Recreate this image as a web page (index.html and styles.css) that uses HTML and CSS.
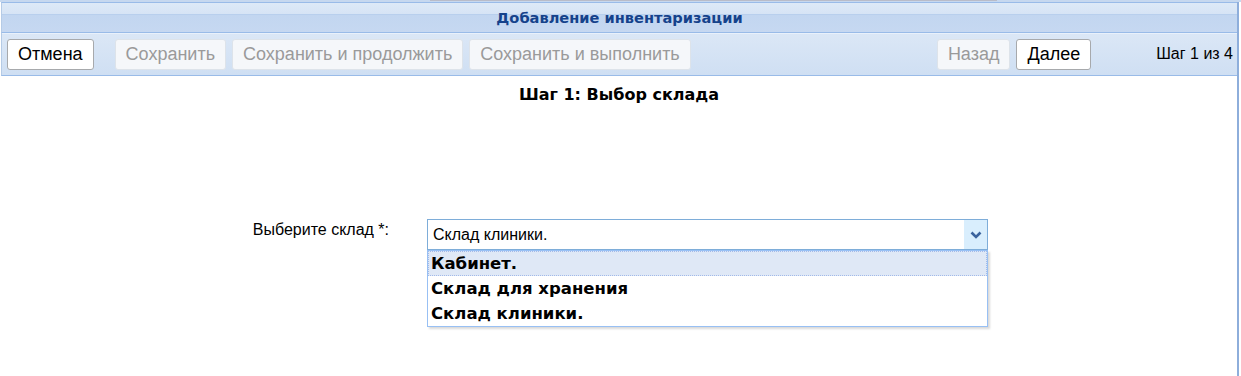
FILE: index.html
```html
<!DOCTYPE html>
<html>
<head>
    <meta charset="utf-8">
    <title>Добавление инвентаризации</title>
    <link rel="stylesheet" href="styles.css">
</head>
<body>
<div class="top-strip">
    <div class="top-strip-thumb"></div>
</div>
<div class="panel">
    <div class="panel-header">Добавление инвентаризации</div>
    <div class="toolbar">
        <div class="btn btn-cancel">Отмена</div>
        <div class="btn is-disabled">Сохранить</div>
        <div class="btn is-disabled">Сохранить и продолжить</div>
        <div class="btn is-disabled">Сохранить и выполнить</div>
        <div class="toolbar-fill"></div>
        <div class="btn is-disabled">Назад</div>
        <div class="btn">Далее</div>
        <div class="step-counter">Шаг 1 из 4</div>
    </div>
    <div class="panel-body">
        <h1 class="step-title">Шаг 1: Выбор склада</h1>
        <div class="form-row">
            <label class="form-label">Выберите склад *:</label>
            <div class="combo">
                <div class="combo-field">
                    <span class="combo-value">Склад клиники.</span>
                    <span class="combo-trigger">
                        <svg width="12" height="8" viewBox="0 0 12 8"><path d="M1.5 1.5 L6 6 L10.5 1.5" fill="none" stroke="#3b639d" stroke-width="2.6"/></svg>
                    </span>
                </div>
                <ul class="combo-list">
                    <li class="combo-item is-selected">Кабинет.</li>
                    <li class="combo-item">Склад для хранения</li>
                    <li class="combo-item">Склад клиники.</li>
                </ul>
            </div>
        </div>
    </div>
</div>
</body>
</html>
```

FILE: styles.css
```css
body {
    margin: 0;
    font-family: "Liberation Sans", Arial, sans-serif;
    background: #fff;
}

.top-strip {
    height: 2px;
    background: #c6d8ef;
}

.top-strip-thumb {
    margin-left: 430px;
    width: 567px;
    height: 1px;
    background: #b9bcc8;
}

.panel {
    width: 1236px;
    margin-left: 1px;
    border-right: 2px solid #8eaedb;
}

.panel-header {
    height: 30px;
    border-top: 1px solid #99bbe8;
    border-left: 1px solid #b5cbe6;
    background: linear-gradient(#dde9f7 0, #d6e4f5 11px, #aec8ea 11px, #c2d6f0 12px, #c6d8f1 29px);
    color: #15428b;
    font-family: "DejaVu Sans", Verdana, sans-serif;
    font-weight: bold;
    font-size: 14.6px;
    line-height: 30px;
    text-align: center;
    box-sizing: border-box;
    padding-bottom: 1px;
}

.toolbar {
    display: flex;
    align-items: center;
    height: 42px;
    padding: 0 4px 0 5px;
    border-top: 1px solid #99bbe8;
    border-bottom: 1px solid #99bbe8;
    border-left: 1px solid #b5cbe6;
    background: linear-gradient(#dbe7f6, #cfdff3);
    box-shadow: inset 0 1px 0 #e9f1fb;
}

.btn {
    height: 29px;
    line-height: 29px;
    padding: 0 10px;
    margin-right: 6px;
    font-size: 18px;
    color: #000;
    background: #fff;
    border: 1px solid #a7a9ac;
    border-radius: 3px;
    margin-top: 1px;
}

.btn-cancel {
    margin-right: 21px;
}

.btn.is-disabled {
    color: #9a9a9a;
    background: #f5f7fa;
    border-color: #dde3ea;
}

.toolbar-fill {
    flex: 1;
}

.step-counter {
    margin-left: 59px;
    font-size: 16px;
}

.panel-body {
    height: 300px;
}

.step-title {
    margin: 0;
    padding-top: 8px;
    text-align: center;
    font-family: "DejaVu Sans", Verdana, sans-serif;
    font-size: 16px;
    font-weight: bold;
    line-height: 22px;
}

.form-row {
    display: flex;
    margin-top: 113px;
}

.form-label {
    width: 388px;
    text-align: right;
    font-size: 16px;
    line-height: 22px;
}

.combo {
    position: relative;
    margin-left: 38px;
    width: 561px;
}

.combo-field {
    display: flex;
    height: 29px;
    border: 1px solid #7eadd9;
}

.combo-value {
    flex: 1;
    padding-left: 5px;
    font-size: 16px;
    line-height: 30px;
}

.combo-trigger {
    width: 23px;
    display: flex;
    align-items: center;
    justify-content: center;
    background: #d9eefd;
}

.combo-list {
    position: absolute;
    top: 31px;
    left: 0;
    width: 559px;
    margin: 0;
    padding: 0;
    list-style: none;
    background: #fff;
    border: 1px solid #98c0f4;
    box-shadow: 2px 2px 2px rgba(0, 0, 0, 0.15);
}

.combo-item {
    height: 25px;
    line-height: 25px;
    padding-left: 3px;
    font-family: "DejaVu Sans", Verdana, sans-serif;
    font-size: 16.5px;
    font-weight: bold;
}

.combo-item.is-selected {
    height: 23px;
    line-height: 23px;
    padding-left: 2px;
    background: #dfe8f6;
    border: 1px dotted #a3bae9;
}
```
